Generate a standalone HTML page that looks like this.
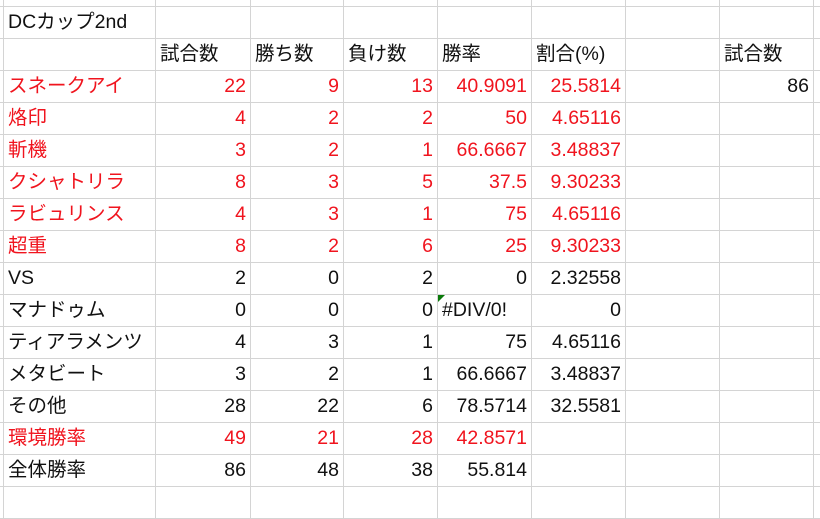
<!DOCTYPE html>
<html><head><meta charset="utf-8"><style>
html,body{margin:0;padding:0;background:#fff;width:820px;height:493px;overflow:hidden}
table{position:absolute;left:-87px;top:-26px;width:940px;border-collapse:collapse;table-layout:fixed;font-family:"Liberation Sans","Noto Sans CJK JP",sans-serif;font-size:19.5px;color:#111}
td{border:1px solid #d4d4d4;height:32px;padding:0 4px 0 4px;white-space:nowrap;overflow:visible;line-height:31px;box-sizing:border-box}
td.n{text-align:right}
tr.r td{color:#f0141e}
.g{position:relative}
.g:before{content:"";position:absolute;left:0;top:0;border-top:7px solid #0a7a0a;border-right:7px solid transparent}
</style></head><body>
<table>
<colgroup><col style="width:90px"><col style="width:152px"><col style="width:95px"><col style="width:93px"><col style="width:94px"><col style="width:94px"><col style="width:94px"><col style="width:94px"><col style="width:94px"><col style="width:40px"></colgroup>
<tr><td></td><td></td><td></td><td></td><td></td><td></td><td></td><td></td><td></td><td></td></tr>
<tr><td></td><td>DCカップ2nd</td><td></td><td></td><td></td><td></td><td></td><td></td><td></td><td></td></tr>
<tr><td></td><td></td><td>試合数</td><td>勝ち数</td><td>負け数</td><td>勝率</td><td>割合(%)</td><td></td><td>試合数</td><td></td></tr>
<tr class="r"><td></td><td>スネークアイ</td><td class="n">22</td><td class="n">9</td><td class="n">13</td><td class="n">40.9091</td><td class="n">25.5814</td><td></td><td class="n" style="color:#111">86</td><td></td></tr>
<tr class="r"><td></td><td>烙印</td><td class="n">4</td><td class="n">2</td><td class="n">2</td><td class="n">50</td><td class="n">4.65116</td><td></td><td></td><td></td></tr>
<tr class="r"><td></td><td>斬機</td><td class="n">3</td><td class="n">2</td><td class="n">1</td><td class="n">66.6667</td><td class="n">3.48837</td><td></td><td></td><td></td></tr>
<tr class="r"><td></td><td>クシャトリラ</td><td class="n">8</td><td class="n">3</td><td class="n">5</td><td class="n">37.5</td><td class="n">9.30233</td><td></td><td></td><td></td></tr>
<tr class="r"><td></td><td>ラビュリンス</td><td class="n">4</td><td class="n">3</td><td class="n">1</td><td class="n">75</td><td class="n">4.65116</td><td></td><td></td><td></td></tr>
<tr class="r"><td></td><td>超重</td><td class="n">8</td><td class="n">2</td><td class="n">6</td><td class="n">25</td><td class="n">9.30233</td><td></td><td></td><td></td></tr>
<tr><td></td><td>VS</td><td class="n">2</td><td class="n">0</td><td class="n">2</td><td class="n">0</td><td class="n">2.32558</td><td></td><td></td><td></td></tr>
<tr><td></td><td>マナドゥム</td><td class="n">0</td><td class="n">0</td><td class="n">0</td><td class="g">#DIV/0!</td><td class="n">0</td><td></td><td></td><td></td></tr>
<tr><td></td><td>ティアラメンツ</td><td class="n">4</td><td class="n">3</td><td class="n">1</td><td class="n">75</td><td class="n">4.65116</td><td></td><td></td><td></td></tr>
<tr><td></td><td>メタビート</td><td class="n">3</td><td class="n">2</td><td class="n">1</td><td class="n">66.6667</td><td class="n">3.48837</td><td></td><td></td><td></td></tr>
<tr><td></td><td>その他</td><td class="n">28</td><td class="n">22</td><td class="n">6</td><td class="n">78.5714</td><td class="n">32.5581</td><td></td><td></td><td></td></tr>
<tr class="r"><td></td><td>環境勝率</td><td class="n">49</td><td class="n">21</td><td class="n">28</td><td class="n">42.8571</td><td></td><td></td><td></td><td></td></tr>
<tr><td></td><td>全体勝率</td><td class="n">86</td><td class="n">48</td><td class="n">38</td><td class="n">55.814</td><td></td><td></td><td></td><td></td></tr>
<tr><td></td><td></td><td></td><td></td><td></td><td></td><td></td><td></td><td></td><td></td></tr>
</table>
</body></html>
